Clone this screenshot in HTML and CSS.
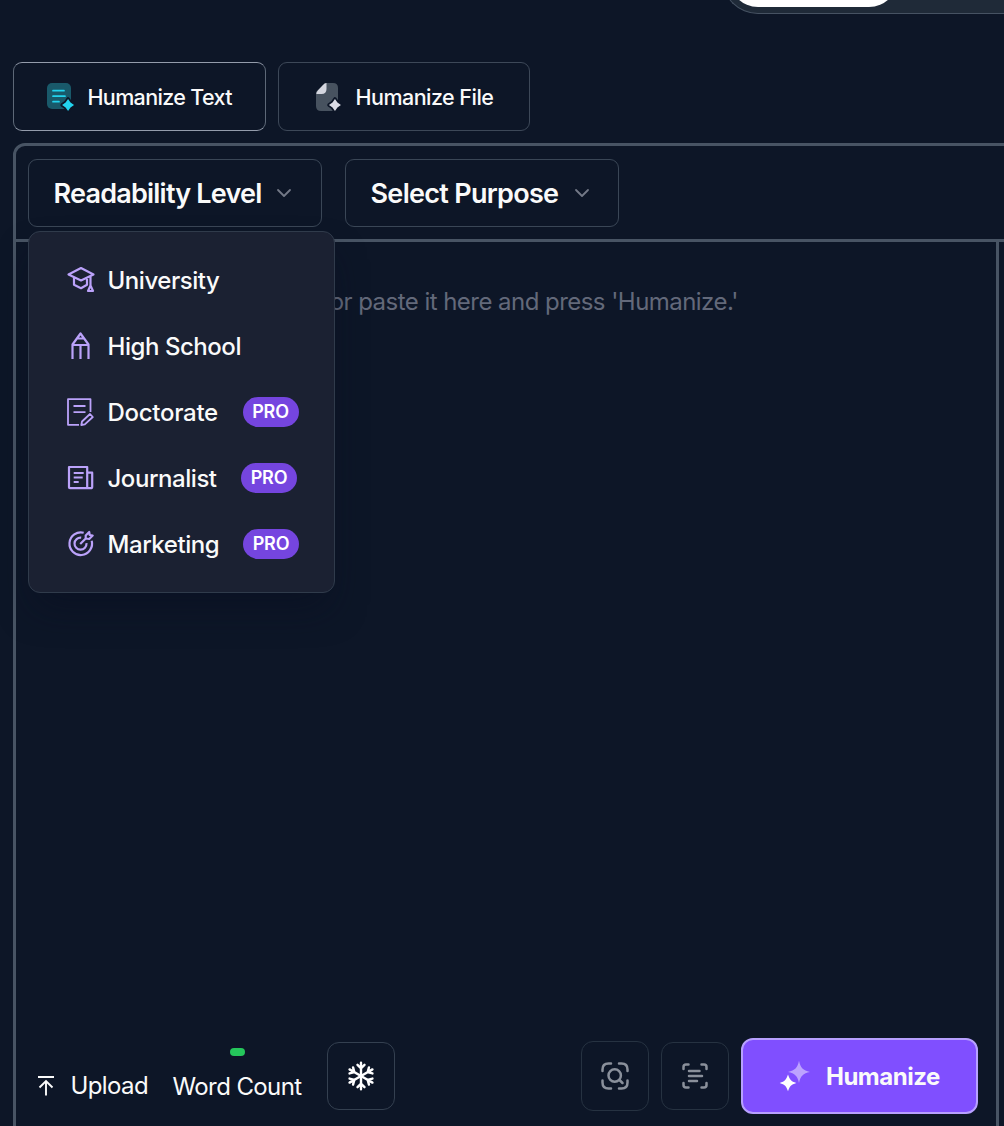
FILE: index.html
```html
<!DOCTYPE html>
<html lang="en">
<head>
<meta charset="utf-8">
<title>Humanize Text</title>
<link rel="stylesheet" href="styles.css">
</head>
<body>
<div class="page">
  <header class="top"><div class="switch"><div class="switch-active"></div></div></header>
  <nav class="tabs">
    <button class="tab tab-active">
      <svg width="28" height="28" viewBox="0 0 28 28"><rect x="1" y="0" width="24" height="26" rx="5" fill="#19596a"/><path d="M7 7.7h11M7 13.2h12M7 18.7h6" stroke="#22d3ee" stroke-width="1.7" stroke-linecap="round"/><path d="M22 15.300l2.800 4 4 2.800-4 2.800-2.800 4-2.800-4-4-2.800 4-2.800z" fill="#22d3ee" stroke="#0d1627" stroke-width="4" stroke-linejoin="round" paint-order="stroke" transform="translate(2.700 2.500) scale(.88)"/></svg>
      <span class="label-text">Humanize Text</span>
    </button>
    <button class="tab tab-file">
      <svg width="28" height="28" viewBox="0 0 28 28"><path d="M11 0h8q5 0 5 5v18q0 5-5 5H7q-5 0-5-5V9z" fill="#47525f"/><path d="M12.500 0v6q0 5-5 5H2.300q0-2 1.500-3.500L9 2q1.600-2 3.500-2z" fill="#d4d6df"/><path d="M22 15.300l2.800 4 4 2.800-4 2.800-2.800 4-2.800-4-4-2.800 4-2.800z" fill="#dbdce5" stroke="#0d1627" stroke-width="4" stroke-linejoin="round" paint-order="stroke" transform="translate(1.600 2.500) scale(.88)"/></svg>
      <span class="label-text file-text">Humanize File</span>
    </button>
  </nav>
  <main class="panel">
    <div class="toolbar">
      <div class="select-wrap">
        <button class="select level"><span class="level-text">Readability Level</span><svg width="16" height="10" viewBox="0 0 16 10"><path d="M2 2l6 6 6-6"/></svg></button>
        <div class="menu">
          <div class="item"><svg width="28" height="28" viewBox="0 0 28 28"><path d="M1.500 8.500L14 2l12.500 6.500L14 14.500zM7 11.500v7.200l7 3.500 6-3.500v-7M23.500 10.500v9M23.500 19.500l-2.500 5.500h5z"/></svg><span class="uni">University</span></div>
          <div class="item"><svg width="28" height="28" viewBox="0 0 28 28"><path d="M5.500 27V12.500L13.500 1.500l8 11V27M5.500 13h16M13.500 13v14M10.500 6.500h6"/></svg><span class="high">High School</span></div>
          <div class="item"><svg class="thin" width="28" height="28" viewBox="0 0 28 28"><path d="M23.500 14V1.200H1v25.600h11M6.500 8h12M6.500 14.200h12"/><path d="M15 23.500l8-7.500 2.800 3-8 7.300-3.500.7z"/></svg><span class="doc">Doctorate</span><b class="pro">PRO</b></div>
          <div class="item"><svg width="28" height="28" viewBox="0 0 28 28"><path d="M2 3h18.200v21.200H3q-1 0-1-1zM20.200 8.700h5v14q0 1.500-1.500 1.500h-3.500M6.700 9h10M6.700 13.500h9M6.700 18h5"/></svg><span class="jour">Journalist</span><b class="pro pro-j">PRO</b></div>
          <div class="item"><svg width="28" height="28" viewBox="0 0 28 28"><path d="M16.700 2.800a11.300 11.300 0 1 0 8 8M14.200 7.700a6 6 0 1 0 5.300 5.500M13.200 14l6-6M18.700 8.500V5.500l3.500-3.500.5 3 3 .5-3.500 3.500z"/></svg><span class="mark">Marketing</span><b class="pro pro-m">PRO</b></div>
        </div>
      </div>
      <button class="select purpose"><span class="purpose-text">Select Purpose</span><svg width="16" height="10" viewBox="0 0 16 10"><path d="M2 2l6 6 6-6"/></svg></button>
    </div>
    <div class="workspace">
      <section class="editor">
        <div class="placeholder">or paste it here and press 'Humanize.'</div>
        <footer class="actions">
          <div class="upload"><svg width="18" height="22" viewBox="0 0 18 22"><path d="M1 2h16" stroke-width="2"/><path d="M9 20.500V6M2.500 12.500L9 6l6.500 6.500" stroke-width="1.900"/></svg><span class="upload-text">Upload</span></div>
          <div class="count"><i class="dot"></i><span class="count-text">Word Count</span></div>
          <button class="square snow"><svg width="30" height="30" viewBox="0 0 30 30"><defs><g id="arm"><path d="M15 15V1.800M11.500 3.800L15 7.300l3.500-3.500"/></g></defs><use href="#arm"/><use href="#arm" transform="rotate(60 15 15)"/><use href="#arm" transform="rotate(120 15 15)"/><use href="#arm" transform="rotate(180 15 15)"/><use href="#arm" transform="rotate(240 15 15)"/><use href="#arm" transform="rotate(300 15 15)"/></svg></button>
          <button class="square scan"><svg width="30" height="30" viewBox="0 0 30 30"><path d="M2.500 10V8.500q0-6 6-6H11M19 2.500h2.500q6 0 6 6V10M2.500 19.500v2q0 6 6 6H11M27.500 19.500v2q0 6-6 6H19"/><circle cx="14.700" cy="14.500" r="6.200"/><path d="M19.500 19l3 3"/></svg></button>
          <button class="square lines"><svg width="30" height="30" viewBox="0 0 30 30"><path d="M3.500 8V6q0-2.500 2.500-2.500h2.500M21.500 3.500H24q2.500 0 2.500 2.500v2M3.500 22v2q0 2.500 2.500 2.500h2.500M26.500 22v2q0 2.500-2.500 2.500h-2.500M9 10h10.500M9 15h13M9 20h8"/></svg></button>
          <button class="submit"><svg width="32" height="32" viewBox="0 0 32 32"><path d="M20 .8c1.500 7 4 9.700 11 11.200-7 1.500-9.500 4-11 11-1.500-7-4-9.500-11-11 7-1.500 9.500-4.200 11-11.200z" fill="#bda3ff"/><path d="M9 14.500c1.800 5.200 3 6.700 8.300 8.500-5.300 1.800-6.500 3-8.300 8.300-1.800-5.300-3-6.500-8.300-8.300 5.300-1.800 6.500-3.300 8.300-8.500z" fill="#fff"/></svg><span class="submit-text">Humanize</span></button>
        </footer>
      </section>
      <aside class="output"></aside>
    </div>
  </main>
</div>
</body>
</html>
```
FILE: styles.css
```css
* { box-sizing: border-box; }
body { margin: 0; background: #0d1627; color: #fafafa; font-family: Inter, "Liberation Sans", sans-serif; }
button { margin: 0; padding: 0; background: none; color: inherit; font: inherit; }
svg { display: block; flex: none; overflow: visible; fill: none; }
span { white-space: nowrap; }
.page { width: 1004px; height: 1126px; overflow: hidden; display: flex; flex-direction: column; }
.top { height: 62px; flex: none; display: flex; justify-content: flex-end; align-items: flex-start; }
.switch { width: 286px; height: 72px; margin: -58px -4px 0 0; border: 1px solid #465262; border-right: 0; border-radius: 36px 0 0 36px; background: #1f2a38; padding: 6px 6px 7px; }
.switch-active { width: 169px; height: 58px; border-radius: 29px; background: #fff; }
.tabs { display: flex; gap: 12px; padding-left: 13px; height: 69px; flex: none; }
.tab { width: 253px; height: 69px; border: 1px solid #3d4858; border-radius: 9px; display: flex; align-items: center; padding-left: 32px; gap: 14px; font-size: 21.500px; font-weight: 530; }
.tab-active { border-color: #949cab; border-left-color: #5d6877; border-right-color: #5d6877; }
.tab-file { width: 252px; padding-left: 35px; }
.tab span { margin-left: -.5px; }
.label-text { letter-spacing: -.64px; }
.file-text { letter-spacing: -.53px; }
.panel { flex: none; width: 1004px; height: 1000px; margin: 12px 0 0 13px; border: 3px solid #485464; border-radius: 12px; display: flex; flex-direction: column; }
.toolbar { height: 96px; flex: none; border-bottom: 3px solid #485464; padding: 13px 0 0 12px; display: flex; gap: 23px; }
.select-wrap { position: relative; }
.select { height: 68px; border: 1px solid #3a4656; border-radius: 9px; display: flex; align-items: center; font-size: 27px; font-weight: 580; padding-left: 24.500px; }
.select svg { stroke: #737987; stroke-width: 1.8; stroke-linecap: round; stroke-linejoin: round; }
.level { width: 294px; gap: 16.500px; }
.purpose { width: 274px; gap: 16px; }
.level-text { width: 206px; letter-spacing: -.78px; text-align: left; }
.purpose-text { width: 187px; letter-spacing: -.7px; text-align: left; }
.menu { position: absolute; z-index: 2; left: 0; top: 72px; width: 307px; height: 362px; border: 1px solid #303b4b; border-radius: 12px; background: #1b2132; padding: 15px 0 0 38px; box-shadow: 0 20px 36px -8px rgba(9,15,32,.55); }
.item { height: 66px; display: flex; align-items: center; font-size: 24px; font-weight: 550; }
.item svg { margin-right: 12.500px; stroke: #bba2fa; stroke-width: 2.200; stroke-linejoin: round; }
.item .thin { stroke-width: 1.8; }
.item span { letter-spacing: -.45px; width: 135.500px; }
.item .doc { width: 135px; letter-spacing: -.28px; }
.item .jour { width: 133.500px; }
.pro { width: 56px; height: 30px; border-radius: 15px; background: #7545df; color: #fff; display: flex; align-items: center; justify-content: center; font-size: 18px; font-weight: 620; letter-spacing: -.2px; padding-bottom: 1px; }
.workspace { display: flex; flex: 1; }
.editor { width: 983px; flex: none; border-right: 3px solid #485464; display: flex; flex-direction: column; }
.placeholder { height: 120px; width: 722px; padding-top: 45px; text-align: right; color: #63697a; font-size: 24px; line-height: 29px; letter-spacing: -.54px; white-space: nowrap; }
.actions { display: flex; align-items: flex-start; padding: 676px 0 0 21px; }
.upload { display: flex; align-items: center; gap: 15.500px; width: 135.500px; height: 29px; margin-top: 33px; font-size: 24px; font-weight: 430; }
.upload svg { stroke: #fafafa; }
.upload-text { letter-spacing: -.6px; }
.count { width: 130px; display: flex; flex-direction: column; margin-top: 10px; font-size: 24px; font-weight: 430; line-height: 29px; }
.dot { width: 15px; height: 8px; border-radius: 4px; background: #25c65b; margin: 0 0 16px 57px; }
.count-text { letter-spacing: -.6px; }
.square { width: 68px; height: 68px; flex: none; border: 1px solid #344050; border-radius: 12px; display: flex; align-items: center; justify-content: center; margin-top: 4px; }
.square svg { stroke: #8a909b; stroke-width: 2.500; stroke-linecap: round; }
.snow { margin-left: 24px; }
.snow svg { stroke: #fff; stroke-width: 2.400; }
.scan { height: 70px; margin: 3px 0 0 186px; border-color: #263241; }
.lines { margin-left: 12px; border-color: #263241; }
.submit { width: 237px; height: 76px; flex: none; margin-left: 12px; border: 2px solid #b7a0ff; border-radius: 12px; background: #804fff; display: flex; align-items: center; padding-left: 36.500px; gap: 15px; font-size: 24px; font-weight: 700; }
.submit-text { letter-spacing: -.5px; }
.output { flex: 1; }
```
